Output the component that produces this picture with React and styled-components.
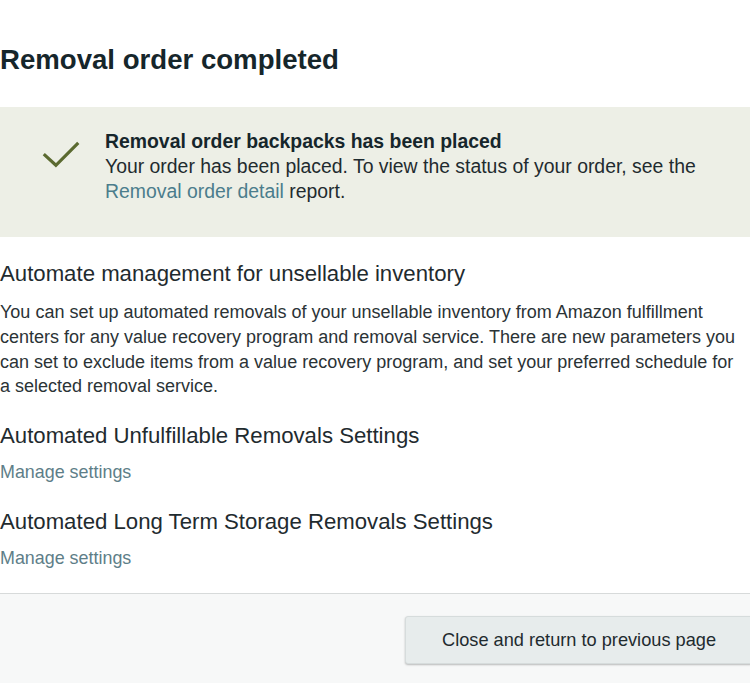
import React from 'react';
import styled, { createGlobalStyle } from 'styled-components';

const GlobalStyle = createGlobalStyle`
  body {
    margin: 0;
    background: #fff;
    font-family: "Liberation Sans", Arial, sans-serif;
    color: #16262b;
  }
`;

const App = () => {
  return (
    <Page>
      <GlobalStyle />
      <Title>Removal order completed</Title>
      <Banner>
        <CheckIcon viewBox="0 0 44 32" aria-hidden="true">
          <path d="M3 15 L16 27 L40 3" />
        </CheckIcon>
        <BannerText>
          <BannerHead>Removal order backpacks has been placed</BannerHead>
          <BannerBody>
            Your order has been placed. To view the status of your order, see the{' '}
            <BannerLink href="#">Removal order detail</BannerLink> report.
          </BannerBody>
        </BannerText>
      </Banner>
      <Section $gap={24}>
        <Heading>Automate management for unsellable inventory</Heading>
        <Paragraph>
          You can set up automated removals of your unsellable inventory from Amazon fulfillment
          centers for any value recovery program and removal service. There are new parameters you
          can set to exclude items from a value recovery program, and set your preferred schedule for
          a selected removal service.
        </Paragraph>
      </Section>
      <Section $gap={24}>
        <Heading>Automated Unfulfillable Removals Settings</Heading>
        <Manage href="#">Manage settings</Manage>
      </Section>
      <Section $gap={26}>
        <Heading>Automated Long Term Storage Removals Settings</Heading>
        <Manage href="#">Manage settings</Manage>
      </Section>
      <Footer>
        <CloseButton>Close and return to previous page</CloseButton>
      </Footer>
    </Page>
  )
}

export default App;

const Page = styled.div`
  width: 750px;
  padding-top: 44px;
  overflow: hidden;
`;
const Title = styled.h1`
  margin: 0 0 31px;
  font-size: 27.6px;
  line-height: 32px;
  font-weight: 700;
  color: #16262b;
`;
const Banner = styled.div`
  display: flex;
  align-items: flex-start;
  height: 130px;
  box-sizing: border-box;
  padding: 22px 0 0 41px;
  background: #edefe6;
`;
const CheckIcon = styled.svg`
  width: 41px;
  height: 30px;
  margin: 11px 23px 0 0;
  flex-shrink: 0;
  path {
    fill: none;
    stroke: #5b6a30;
    stroke-width: 3.4;
  }
`;
const BannerText = styled.div`
  font-size: 19.4px;
  line-height: 25px;
  color: #1f2b2f;
`;
const BannerHead = styled.div`
  font-weight: 700;
  color: #16262b;
`;
const BannerBody = styled.div``;
const BannerLink = styled.a`
  color: #4b7d8c;
  text-decoration: none;
`;
const Section = styled.div`
  margin-top: ${(p) => p.$gap}px;
`;
const Heading = styled.h2`
  margin: 0;
  font-size: 22.2px;
  line-height: 26px;
  font-weight: 400;
  color: #1f2b2f;
`;
const Paragraph = styled.p`
  max-width: 742px;
  margin: 13px 0 0;
  font-size: 18px;
  line-height: 24.8px;
  color: #2b3336;
`;
const Manage = styled.a`
  display: block;
  margin-top: 12px;
  font-size: 17.9px;
  line-height: 22px;
  color: #5e7e88;
  text-decoration: none;
`;
const Footer = styled.div`
  display: flex;
  justify-content: flex-end;
  margin-top: 24px;
  height: 90px;
  box-sizing: border-box;
  padding-top: 22px;
  border-top: 1px solid #d7dada;
  background: #f7f8f8;
`;
const CloseButton = styled.button`
  width: 348px;
  height: 48px;
  margin-right: -3px;
  border: 1px solid #d6dcdc;
  border-radius: 3px;
  background: #e7ecec;
  box-shadow: 0 1px 2px rgba(0, 0, 0, 0.25);
  font-family: "Liberation Sans", Arial, sans-serif;
  font-size: 18.2px;
  color: #1f2b2f;
`;
